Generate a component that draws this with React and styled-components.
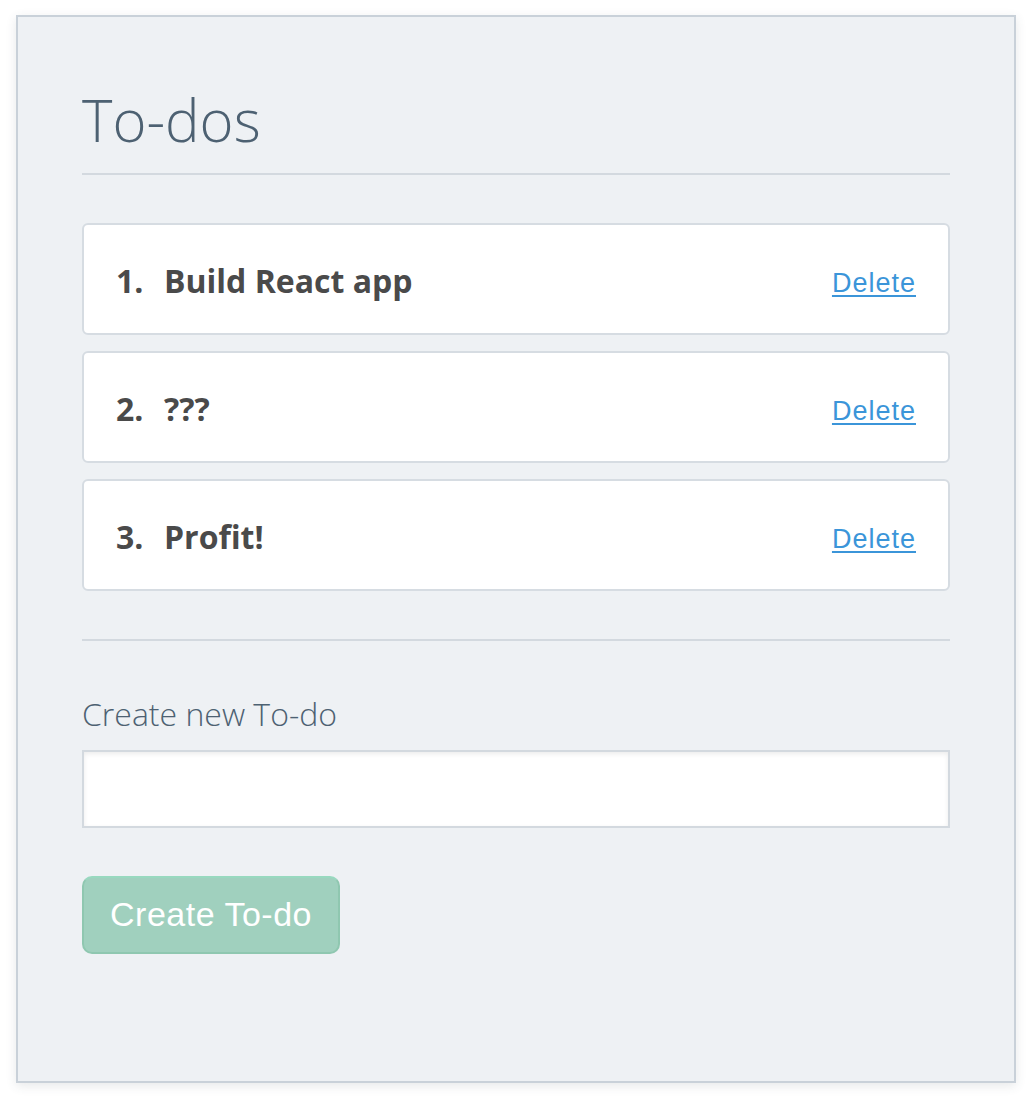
import React, { useState } from "react";
import styled, { createGlobalStyle } from "styled-components";

const GlobalStyle = createGlobalStyle`
  * { box-sizing: border-box; }
  body {
    margin: 0;
    background: #ffffff;
    font-family: "Open Sans", "Liberation Sans", sans-serif;
  }
`;

const todos = ["Build React app", "???", "Profit!"];

const App = () => {
  const [text, setText] = useState("");
  return (
    <>
      <GlobalStyle />
      <Page>
        <Panel>
          <Title>To-dos</Title>
          <Divider $top={24} />
          <List>
            {todos.map((todo, i) => (
              <Card key={todo}>
                <ItemText>
                  <Num>{i + 1}.</Num>
                  {todo}
                </ItemText>
                <DeleteLink href="#">Delete</DeleteLink>
              </Card>
            ))}
          </List>
          <Divider $top={48} />
          <Label htmlFor="new-todo">Create new To-do</Label>
          <Input
            id="new-todo"
            value={text}
            onChange={(e) => setText(e.target.value)}
          />
          <Button disabled={!text}>Create To-do</Button>
        </Panel>
      </Page>
    </>
  );
};

const Page = styled.div`
  padding: 15px 14px 16px 16px;
`;

const Panel = styled.div`
  width: 1000px;
  height: 1068px;
  background: #eef1f4;
  border: 2px solid #c9d1d9;
  box-shadow: 0 3px 10px rgba(60, 70, 80, 0.12);
  padding: 74px 64px 0;
`;

const Title = styled.h1`
  margin: 0;
  font-family: "Open Sans", sans-serif;
  font-weight: 300;
  font-size: 58px;
  line-height: 1;
  color: #4d6172;
`;

const Divider = styled.hr`
  margin: ${({ $top }) => $top}px 0 0;
  border: 0;
  height: 2px;
  background: #d3d9df;
`;

const List = styled.div`
  display: flex;
  flex-direction: column;
  gap: 16px;
  margin-top: 48px;
`;

const Card = styled.div`
  height: 112px;
  display: flex;
  align-items: center;
  justify-content: space-between;
  padding: 0 32px;
  background: #ffffff;
  border: 2px solid #d6dce2;
  border-radius: 6px;
`;

const ItemText = styled.span`
  font-family: "Open Sans", sans-serif;
  font-weight: 700;
  font-size: 32px;
  color: #4a4a4a;
  margin-top: 3px;
`;

const Num = styled.span`
  display: inline-block;
  width: 48px;
`;

const DeleteLink = styled.a`
  font-family: "Liberation Sans", Arial, sans-serif;
  font-size: 27px;
  letter-spacing: 1px;
  color: #3b95d9;
  text-decoration: underline;
  text-underline-offset: 3px;
  margin-top: 8px;
`;

const Label = styled.label`
  display: block;
  margin-top: 51px;
  font-family: "Open Sans", sans-serif;
  font-weight: 300;
  font-size: 32px;
  line-height: 1.4;
  color: #4d6172;
`;

const Input = styled.input`
  display: block;
  width: 100%;
  height: 78px;
  margin-top: 13px;
  border: 2px solid #d3d9df;
  background: #ffffff;
  box-shadow: inset 0 2px 5px rgba(0, 0, 0, 0.08);
  font-size: 28px;
  padding: 0 16px;
  outline: none;
`;

const Button = styled.button`
  display: block;
  margin-top: 48px;
  width: 258px;
  height: 78px;
  border: 2px solid #8fc7b0;
  border-top-color: #98d9bf;
  border-radius: 10px;
  background: #a0d0be;
  color: #ffffff;
  font-family: "Liberation Sans", Arial, sans-serif;
  font-size: 34px;
  letter-spacing: 0.5px;
  cursor: pointer;
  padding: 0;
`;

export default App;
